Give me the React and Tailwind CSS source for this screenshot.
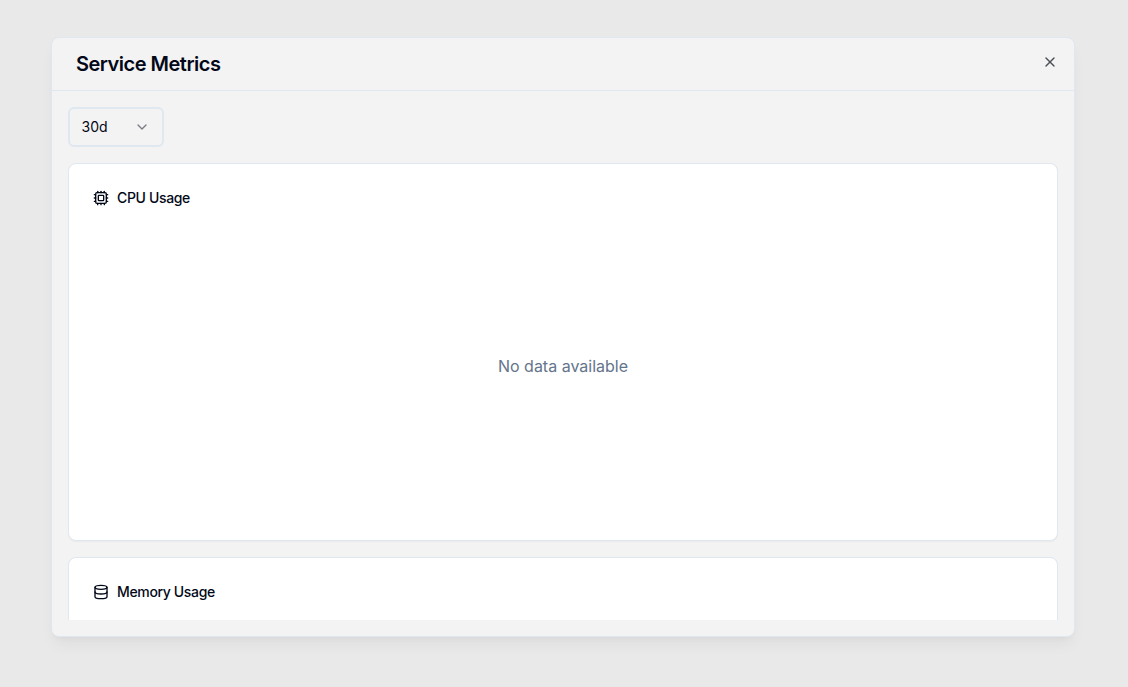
import React from "react";
import { Cpu, Database, ChevronDown, X } from "lucide-react";

function Card({ icon: Icon, title, children }) {
  return (
    <div className="h-[378px] shrink-0 rounded-lg border border-[#dfe7f0] bg-white px-6 pt-6 shadow-[0_1px_2px_rgba(0,0,0,0.04)]">
      <div className="flex items-center gap-2">
        <Icon className="h-4 w-4 text-[#020817]" strokeWidth={2} />
        <span className="text-sm font-medium leading-5 tracking-tight text-[#020817]">{title}</span>
      </div>
      {children}
    </div>
  );
}

export default function App() {
  return (
    <div className="h-[687px] w-full bg-[#e9e9e9] pl-[51px] pt-[37px] font-['Inter',sans-serif]">
      <div className="relative flex h-[600px] w-[1024px] flex-col rounded-lg border border-[#dfe7f0] bg-[#f3f3f3] shadow-[0_10px_15px_-3px_rgba(0,0,0,0.05),0_4px_6px_-4px_rgba(0,0,0,0.05)]">
        <div className="flex h-[53px] shrink-0 items-center border-b border-[#dfe7f0] px-6">
          <h2 className="text-xl font-semibold leading-7 tracking-tight text-[#020817]">Service Metrics</h2>
        </div>
        <button className="absolute right-4 top-4 text-[#4a4e56]">
          <X className="h-4 w-4" strokeWidth={2} />
        </button>
        <div className="flex min-h-0 flex-1 flex-col p-4">
          <div className="flex h-10 w-24 shrink-0 items-center justify-between rounded-md border-2 border-[#dfe7f0] px-3 text-sm text-[#020817]">
            <span className="-ml-[0.5px]">30d</span>
            <ChevronDown className="h-4 w-4 text-[#7a7b85]" strokeWidth={2} />
          </div>
          <div className="mt-4 flex min-h-0 flex-1 flex-col gap-4 overflow-hidden">
            <Card icon={Cpu} title="CPU Usage">
              <div className="flex h-[316px] items-center justify-center text-base text-[#64748b]">No data available</div>
            </Card>
            <Card icon={Database} title="Memory Usage" />
          </div>
        </div>
      </div>
    </div>
  );
}
